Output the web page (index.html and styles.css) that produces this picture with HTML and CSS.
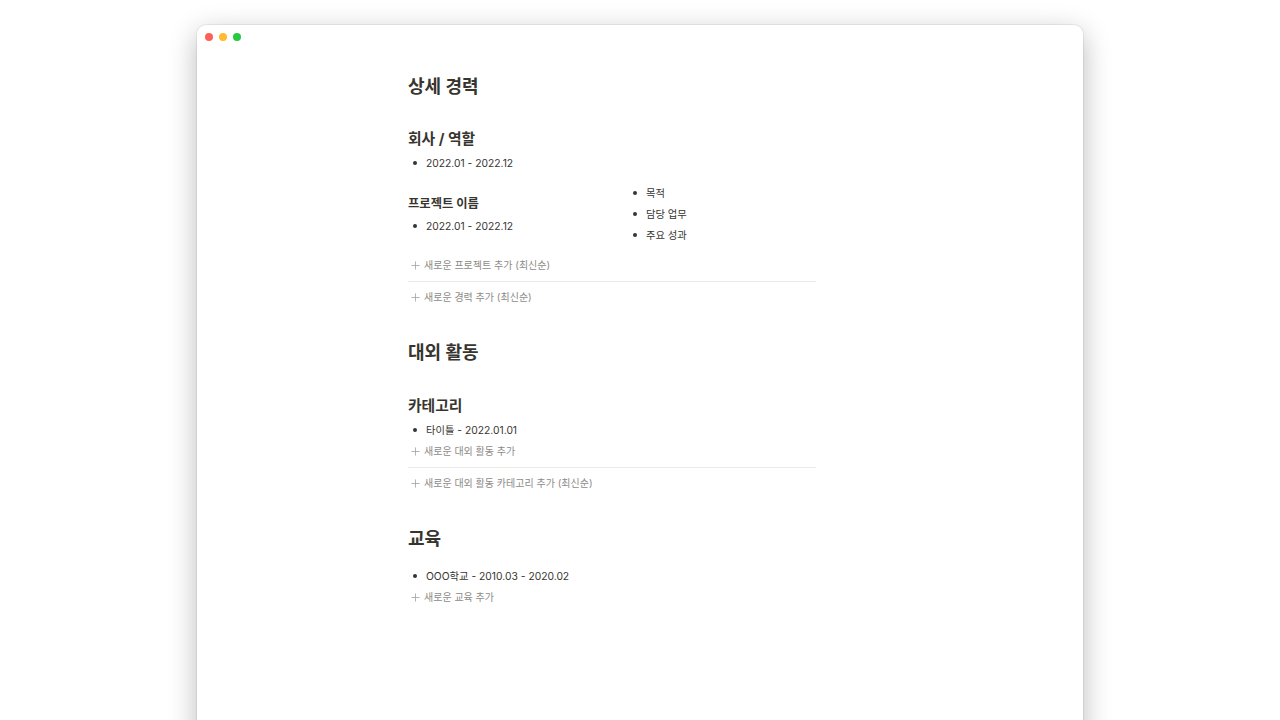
FILE: index.html
```html
<!DOCTYPE html>
<html lang="ko">
<head>
<meta charset="utf-8">
<link rel="stylesheet" href="styles.css">
</head>
<body>
<div class="window">
  <div class="titlebar">
    <span class="dot red"></span><span class="dot yellow"></span><span class="dot green"></span>
  </div>
  <div class="content">
    <section class="sec">
      <h1>상세 경력</h1>
      <h2>회사 / 역할</h2>
      <ul class="list"><li>2022.01 - 2022.12</li></ul>
      <div class="project">
        <div class="proj-left">
          <h3>프로젝트 이름</h3>
          <ul class="list"><li>2022.01 - 2022.12</li></ul>
        </div>
        <ul class="list proj-right">
          <li>목적</li>
          <li>담당 업무</li>
          <li>주요 성과</li>
        </ul>
      </div>
      <div class="add add-proj"><svg viewBox="0 0 10 10"><path d="M5 0.5V9.5M0.5 5H9.5"/></svg>새로운 프로젝트 추가 (최신순)</div>
      <hr class="divider">
      <div class="add"><svg viewBox="0 0 10 10"><path d="M5 0.5V9.5M0.5 5H9.5"/></svg>새로운 경력 추가 (최신순)</div>
    </section>

    <section class="sec">
      <h1>대외 활동</h1>
      <h2 class="h2b">카테고리</h2>
      <ul class="list lb"><li>타이틀 - 2022.01.01</li></ul>
      <div class="add"><svg viewBox="0 0 10 10"><path d="M5 0.5V9.5M0.5 5H9.5"/></svg>새로운 대외 활동 추가</div>
      <hr class="divider">
      <div class="add"><svg viewBox="0 0 10 10"><path d="M5 0.5V9.5M0.5 5H9.5"/></svg>새로운 대외 활동 카테고리 추가 (최신순)</div>
    </section>

    <section class="sec">
      <h1>교육</h1>
      <ul class="list edu"><li>OOO학교 - 2010.03 - 2020.02</li></ul>
      <div class="add"><svg viewBox="0 0 10 10"><path d="M5 0.5V9.5M0.5 5H9.5"/></svg>새로운 교육 추가</div>
    </section>
  </div>
</div>
</body>
</html>
```

FILE: styles.css
```css
html, body {
  margin: 0;
  padding: 0;
  background: #ffffff;
  height: 720px;
  overflow: hidden;
}
body {
  font-family: Inter, "Noto Sans CJK KR", sans-serif;
  color: #37352f;
}
.window {
  margin: 25px 0 0 197px;
  width: 886px;
  height: 720px;
  background: #fff;
  border-radius: 9px 9px 0 0;
  box-shadow: 0 0 0 1px rgba(0,0,0,0.06), 0 8px 28px rgba(0,0,0,0.28);
}
.titlebar {
  height: 24px;
  display: flex;
  align-items: center;
  gap: 6px;
  padding-left: 8px;
}
.dot {
  width: 8px;
  height: 8px;
  border-radius: 50%;
}
.red { background: #fe5f57; }
.yellow { background: #febc2e; }
.green { background: #28c840; }
.content {
  padding: 24px 0 0 211px;
  width: 408px;
}
.sec + .sec { margin-top: 32px; }
h1 {
  margin: 0;
  font-size: 18px;
  line-height: 28px;
  font-weight: 700;
}
h2 {
  margin: 27px 0 0;
  font-size: 14.8px;
  line-height: 22px;
  font-weight: 700;
}
.h2b { margin-top: 28px; }
h3 {
  margin: 0;
  font-size: 12.3px;
  line-height: 20px;
  font-weight: 700;
}
.list {
  list-style: none;
  margin: 4px 0 0;
  padding: 0 0 0 5px;
  font-size: 10.3px;
  line-height: 18px;
}
.list li::before {
  content: "";
  display: inline-block;
  width: 4px;
  height: 4px;
  border-radius: 50%;
  background: #37352f;
  margin-right: 9px;
  vertical-align: middle;
  position: relative;
  top: -1px;
}
.lb { margin-top: 4px; }
.edu { margin-top: 14px; }
.project {
  display: flex;
  align-items: center;
  margin-top: 11px;
}
.proj-left { width: 220px; }
.proj-left .list { margin-top: 3px; }
.proj-right { margin: 0; }
.proj-right li { line-height: 21px; }
.add {
  display: flex;
  align-items: center;
  gap: 4px;
  padding-left: 3px;
  font-size: 10px;
  line-height: 20px;
  color: #8c8b87;
  margin-top: 2px;
}
.add-proj { margin-top: 9px; }
.add svg {
  width: 9px;
  height: 9px;
  fill: none;
  stroke: #a3a29e;
  stroke-width: 0.9;
}
.divider {
  margin: 6px 0 5px;
  border: 0;
  border-top: 1px solid #e9e9e7;
  height: 0;
}
.divider + .add { margin-top: 0; }
```
